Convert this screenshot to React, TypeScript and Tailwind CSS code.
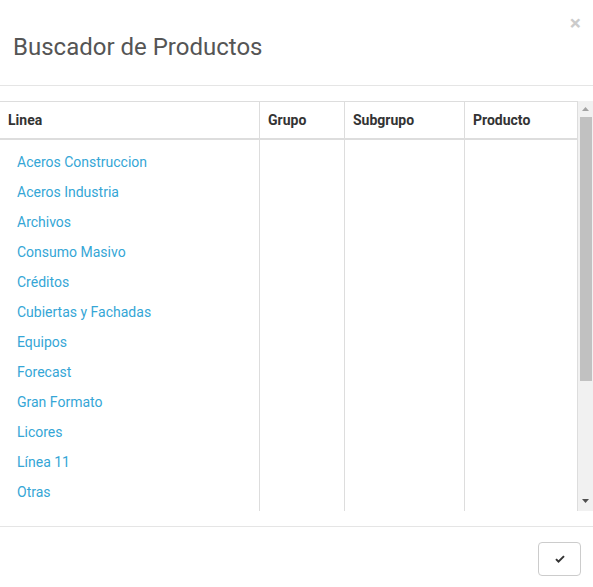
import React from 'react';

const lineas = [
  'Aceros Construccion',
  'Aceros Industria',
  'Archivos',
  'Consumo Masivo',
  'Créditos',
  'Cubiertas y Fachadas',
  'Equipos',
  'Forecast',
  'Gran Formato',
  'Licores',
  'Línea 11',
  'Otras',
];

const columns = [
  { title: 'Linea', width: 'w-[259px]' },
  { title: 'Grupo', width: 'w-[85px]' },
  { title: 'Subgrupo', width: 'w-[120px]' },
  { title: 'Producto', width: 'flex-1' },
];

const App: React.FC = () => {
  return (
    <div className="w-[593px] h-[587px] bg-white text-[#333] font-['Roboto',sans-serif] overflow-hidden flex flex-col">
      {/* Header */}
      <div className="h-[86px] border-b border-[#e5e5e5] flex items-start justify-between pl-[13px] pr-[12px]">
        <h4 className="text-[24px] leading-none text-[#555] mt-[35px]">Buscador de Productos</h4>
        <button className="text-[21px] font-bold leading-none text-[#000] opacity-20 mt-[13px]">×</button>
      </div>

      {/* Body */}
      <div className="pt-[15px] pb-[15px]">
        <div className="flex h-[410px]">
          <div className="flex-1 flex flex-col border-t border-[#ddd] overflow-hidden">
            {/* header row */}
            <div className="flex h-[38px] border-b-2 border-[#ddd] shrink-0">
              {columns.map((c, i) => (
                <div
                  key={c.title}
                  className={`${c.width} ${i > 0 ? 'border-l border-[#ddd]' : ''} ${i === 3 ? 'border-r' : ''} flex items-center pl-[8px] text-[14px] font-bold text-[#333]`}
                >
                  {c.title}
                </div>
              ))}
            </div>
            {/* body row */}
            <div className="flex flex-1 overflow-hidden">
              <div className="w-[259px] pt-[7px] pl-[17px]">
                {lineas.map((l) => (
                  <div key={l} className="h-[30px] flex items-center text-[14px] text-[#35a6d6]">
                    {l}
                  </div>
                ))}
              </div>
              <div className="w-[85px] border-l border-[#ddd]" />
              <div className="w-[120px] border-l border-[#ddd]" />
              <div className="flex-1 border-l border-r border-[#ddd]" />
            </div>
          </div>

          {/* scrollbar */}
          <div className="w-[15px] bg-[#f1f1f1] flex flex-col items-center">
            <div className="h-[16px] flex items-center justify-center">
              <svg width="7" height="4" viewBox="0 0 7 4"><path d="M0 4 L3.5 0 L7 4 Z" fill="#a3a3a3" /></svg>
            </div>
            <div className="w-[12px] h-[264px] bg-[#c1c1c1]" />
            <div className="flex-1" />
            <div className="h-[16px] flex items-center justify-center mb-[2px]">
              <svg width="7" height="4" viewBox="0 0 7 4"><path d="M0 0 L7 0 L3.5 4 Z" fill="#505050" /></svg>
            </div>
          </div>
        </div>
      </div>

      {/* Footer */}
      <div className="border-t border-[#e5e5e5] flex justify-end pt-[15px] pr-[12px]">
        <button className="w-[43px] h-[34px] border border-[#ccc] rounded-[4px] bg-white flex items-center justify-center">
          <svg width="12" height="9" viewBox="0 0 11 9">
            <path d="M0.8 4.8 L2.2 3.4 L4 5.2 L8.8 0.4 L10.2 1.8 L4 8 Z" fill="#333" />
          </svg>
        </button>
      </div>
    </div>
  );
};

export default App;
